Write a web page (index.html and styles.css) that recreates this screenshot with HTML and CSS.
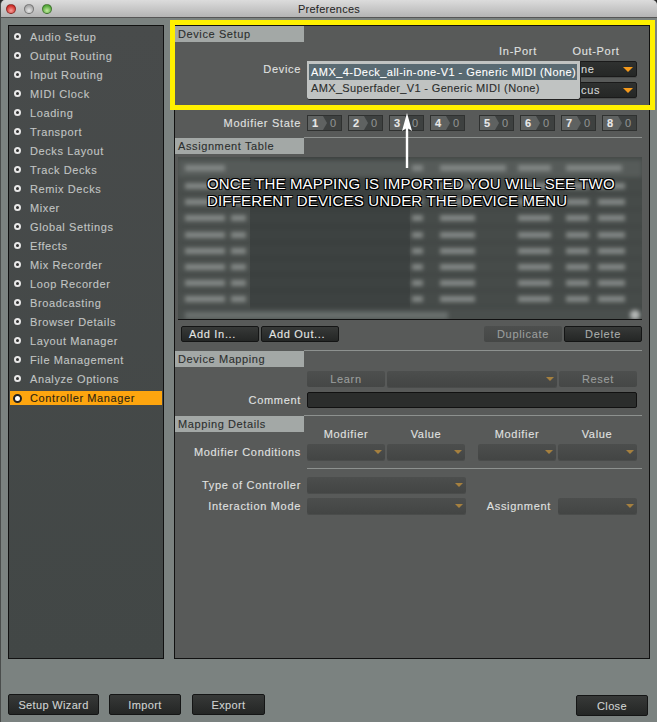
FILE: index.html
```html
<!DOCTYPE html>
<html lang="en">
<head>
    <meta charset="UTF-8">
    <title>Preferences</title>
    <link rel="stylesheet" href="styles.css">
</head>
<body>
<div class="window">
    <div class="titlebar">
        <div class="lights">
            <span class="light red"></span>
            <span class="light grey"></span>
            <span class="light green"></span>
        </div>
        <div class="title">Preferences</div>
    </div>

    <div class="content">
        <ul class="sidebar">
            <li><i></i>Audio Setup</li>
            <li><i></i>Output Routing</li>
            <li><i></i>Input Routing</li>
            <li><i></i>MIDI Clock</li>
            <li><i></i>Loading</li>
            <li><i></i>Transport</li>
            <li><i></i>Decks Layout</li>
            <li><i></i>Track Decks</li>
            <li><i></i>Remix Decks</li>
            <li><i></i>Mixer</li>
            <li><i></i>Global Settings</li>
            <li><i></i>Effects</li>
            <li><i></i>Mix Recorder</li>
            <li><i></i>Loop Recorder</li>
            <li><i></i>Broadcasting</li>
            <li><i></i>Browser Details</li>
            <li><i></i>Layout Manager</li>
            <li><i></i>File Management</li>
            <li><i></i>Analyze Options</li>
            <li class="active"><i></i>Controller Manager</li>
        </ul>

        <div class="main">
            <div class="section-head">Device Setup</div>
            <div class="row port-labels">
                <span class="col-label w-78">In-Port</span>
                <span class="col-label w-78">Out-Port</span>
            </div>
            <div class="row device-row">
                <span class="label">Device</span>
                <div class="select dark out-port">ne</div>
            </div>
            <div class="row focus-row">
                <div class="select dark out-port">cus</div>
            </div>
            <div class="row modifier-row">
                <span class="label">Modifier State</span>
                <div class="mod"><b>1</b><s></s><em>0</em></div>
                <div class="mod"><b>2</b><s></s><em>0</em></div>
                <div class="mod"><b>3</b><s></s><em>0</em></div>
                <div class="mod"><b>4</b><s></s><em>0</em></div>
                <div class="mod group-start"><b>5</b><s></s><em>0</em></div>
                <div class="mod"><b>6</b><s></s><em>0</em></div>
                <div class="mod"><b>7</b><s></s><em>0</em></div>
                <div class="mod"><b>8</b><s></s><em>0</em></div>
            </div>

            <div class="rule full table-rule"></div>
            <div class="section-head">Assignment Table</div>
            <div class="table">
                <div class="blur">
                    <div class="t-row t-header"><span class="c1"></span><span class="c3"></span><span class="c4 wide"></span><span class="c5"></span><span class="c6 wide"></span></div>
                    <div class="t-row"><span class="c1"></span><span class="c2"></span><span class="c3"></span><span class="c4"></span><span class="c5"></span><span class="c6"></span><span class="c7"></span></div>
                    <div class="t-row"><span class="c1"></span><span class="c2"></span><span class="c3"></span><span class="c4"></span><span class="c5"></span><span class="c6"></span><span class="c7"></span></div>
                    <div class="t-row"><span class="c1"></span><span class="c2"></span><span class="c3"></span><span class="c4"></span><span class="c5"></span><span class="c6"></span><span class="c7"></span></div>
                    <div class="t-row"><span class="c1"></span><span class="c2"></span><span class="c3"></span><span class="c4"></span><span class="c5"></span><span class="c6"></span><span class="c7"></span></div>
                    <div class="t-row"><span class="c1"></span><span class="c2"></span><span class="c3"></span><span class="c4"></span><span class="c5"></span><span class="c6"></span><span class="c7"></span></div>
                    <div class="t-row"><span class="c1"></span><span class="c2"></span><span class="c3"></span><span class="c4"></span><span class="c5"></span><span class="c6"></span><span class="c7"></span></div>
                    <div class="t-row"><span class="c1"></span><span class="c2"></span><span class="c3"></span><span class="c4"></span><span class="c5"></span><span class="c6"></span><span class="c7"></span></div>
                    <div class="t-row"><span class="c1"></span><span class="c2"></span><span class="c3"></span><span class="c4"></span><span class="c5"></span><span class="c6"></span><span class="c7"></span></div>
                    <div class="scrollbar"><span class="thumb"></span><span class="corner"></span></div>
                </div>
            </div>
            <div class="row table-buttons">
                <button class="btn w-78 left">Add In...</button>
                <button class="btn w-78 left">Add Out...</button>
                <button class="btn w-78 off push">Duplicate</button>
                <button class="btn w-78 delete">Delete</button>
            </div>

            <div class="rule full mapping-rule"></div>
            <div class="section-head">Device Mapping</div>
            <div class="row learn-row">
                <span class="spacer"></span>
                <button class="btn w-78 off">Learn</button>
                <div class="select w-170"></div>
                <button class="btn w-78 off">Reset</button>
            </div>
            <div class="row comment-row">
                <span class="label">Comment</span>
                <div class="comment"></div>
            </div>

            <div class="rule full details-rule"></div>
            <div class="section-head">Mapping Details</div>
            <div class="row cond-labels">
                <span class="spacer"></span>
                <span class="col-label w-78">Modifier</span>
                <span class="col-label w-78">Value</span>
                <span class="col-label w-78 far">Modifier</span>
                <span class="col-label w-78">Value</span>
            </div>
            <div class="row cond-row">
                <span class="label">Modifier Conditions</span>
                <div class="select w-78"></div>
                <div class="select w-78"></div>
                <div class="select w-78 far"></div>
                <div class="select w-79"></div>
            </div>
            <div class="rule short"></div>
            <div class="row type-row">
                <span class="label">Type of Controller</span>
                <div class="select w-159"></div>
            </div>
            <div class="row mode-row">
                <span class="label">Interaction Mode</span>
                <div class="select w-159"></div>
                <span class="assign-label">Assignment</span>
                <div class="select w-79"></div>
            </div>
        </div>
    </div>

    <div class="footer">
        <button class="btn foot w-91">Setup Wizard</button>
        <button class="btn foot w-72">Import</button>
        <button class="btn foot w-73 export">Export</button>
        <button class="btn foot close">Close</button>
    </div>

    <!-- annotations drawn over the screenshot -->
    <div class="highlight"></div>
    <div class="popup">
        <div class="popup-item selected">AMX_4-Deck_all-in-one-V1 - Generic MIDI (None)</div>
        <div class="popup-item">AMX_Superfader_V1 - Generic MIDI (None)</div>
    </div>
    <svg class="arrow" width="14" height="56" viewBox="0 0 14 56">
        <path d="M7 0 L12 18 L8.2 15.5 L8.2 55 L5.8 55 L5.8 15.5 L2 18 Z" fill="#fff"/>
    </svg>
    <div class="caption">ONCE THE MAPPING IS IMPORTED YOU WILL SEE TWO<br>DIFFERENT DEVICES UNDER THE DEVICE MENU</div>
</div>
</body>
</html>
```

FILE: styles.css
```css
* {
    box-sizing: border-box;
}
html, body {
    margin: 0;
    padding: 0;
    background: #2a2a2a;
}
body {
    font-family: "Liberation Sans", Arial, sans-serif;
    font-size: 11px;
    letter-spacing: 0.6px;
    -webkit-text-stroke: 0.1px;
    width: 657px;
    height: 722px;
    overflow: hidden;
}
.window {
    position: relative;
    width: 657px;
    height: 722px;
    background: #7b8280;
    border-left: 1px solid #4a4d4c;
    border-radius: 5px 5px 0 0;
    overflow: hidden;
}

/* title bar */
.titlebar {
    position: relative;
    height: 18px;
    background: linear-gradient(#dcdcdc, #b4b4b4);
    border-bottom: 1px solid #555;
}
.lights {
    position: absolute;
    left: 5px;
    top: 4px;
    display: flex;
    gap: 8px;
}
.light {
    width: 10px;
    height: 10px;
    border-radius: 50%;
    border: 1px solid rgba(0, 0, 0, 0.35);
}
.red { background: radial-gradient(circle at 50% 70%, #f9a09a, #cf2f2a 70%); }
.grey { background: radial-gradient(circle at 50% 70%, #e8e8e8, #a8a8a8 70%); }
.green { background: radial-gradient(circle at 50% 70%, #c4eda0, #55a83c 70%); }
.title {
    text-align: center;
    font-size: 11px;
    line-height: 18px;
    letter-spacing: 0.25px;
    -webkit-text-stroke: 0;
    color: #222;
}

/* main area */
.content {
    display: flex;
    gap: 10px;
    padding: 7px 0 0 7px;
}
.sidebar {
    list-style: none;
    margin: 0;
    padding: 1px 1px 0;
    width: 156px;
    height: 634px;
    background: linear-gradient(#484b4b, #424746);
    border: 1px solid #111;
}
.sidebar li {
    display: flex;
    align-items: center;
    height: 19px;
    color: #c2c5c4;
    padding-left: 4px;
    white-space: nowrap;
}
.sidebar li i {
    width: 7px;
    height: 7px;
    margin-right: 9px;
    border-radius: 50%;
    border: 2px solid #e8e8e8;
    background: #333;
}
.sidebar li.active {
    height: 14px;
    margin-top: 3px;
    background: #fda50f;
    color: #2d2410;
}
.sidebar li.active i {
    width: 9px;
    height: 9px;
    margin-right: 8px;
    margin-left: -1px;
    border: 2px solid #222;
    background: #fff;
}
.main {
    width: 476px;
    height: 634px;
    padding-right: 7px;
    background: #585a59;
    border: 1px solid #111;
    color: #e0e2e1;
    letter-spacing: 0.68px;
}
.section-head {
    width: 129px;
    height: 16px;
    line-height: 16px;
    padding-left: 3px;
    background: #a3a8a6;
    color: #2c2f2e;
    letter-spacing: 0.6px;
}
.row {
    display: flex;
    align-items: center;
    height: 16px;
    gap: 2px;
}
.label {
    width: 126px;
    margin-right: 4px;
    text-align: right;
    white-space: nowrap;
}
.spacer {
    width: 130px;
}
.col-label {
    text-align: center;
    display: block;
}
.port-labels {
    margin-top: 1px;
    justify-content: flex-end;
    gap: 0;
    padding-right: 7px;
}
.device-row {
    margin-top: 2px;
    padding-right: 5px;
}
.focus-row {
    margin-top: 5px;
    padding-right: 5px;
    justify-content: flex-end;
}
.out-port {
    width: 79px;
    margin-left: auto;
    padding-left: 22px;
}
.modifier-row {
    margin-top: 17px;
    gap: 6px;
}
.modifier-row .label {
    margin-right: 0;
}

/* select boxes */
.select {
    position: relative;
    height: 16px;
    line-height: 15px;
    background: linear-gradient(#4c4e4d, #434544);
    border-radius: 2px;
    box-shadow: 0 1px 0 #4a4c4b;
}
.select::after {
    content: "";
    position: absolute;
    right: 3px;
    top: 6px;
    border-left: 4px solid transparent;
    border-right: 4px solid transparent;
    border-top: 4px solid #a5803f;
}
.select.dark {
    background: linear-gradient(#2f3130, #252726);
    color: #d5d7d6;
    border: 1px solid #1a1a1a;
    line-height: 14px;
}
.select.dark::after {
    right: 3px;
    top: 5px;
    border-left-width: 5px;
    border-right-width: 5px;
    border-top: 5px solid #f59a1b;
}
.w-78 { width: 78px; }
.w-79 { width: 79px; }
.w-170 { width: 170px; }
.w-159 { width: 159px; }
.w-91 { width: 91px; }
.w-72 { width: 72px; }
.w-73 { width: 73px; }
.far { margin-left: 11px; }

/* modifier state */
.mod {
    display: flex;
    align-items: center;
    width: 35px;
    height: 16px;
    background: #3e4140;
    border: 1px solid #2f3130;
}
.mod b {
    width: 15px;
    height: 14px;
    line-height: 14px;
    text-align: center;
    color: #e8e8e8;
    background: #5f6261;
}
.mod s {
    width: 0;
    height: 0;
    border-top: 7px solid transparent;
    border-bottom: 7px solid transparent;
    border-left: 4px solid #5f6261;
}
.mod em {
    font-style: normal;
    margin-left: 3px;
    color: #8f9392;
}
.group-start {
    margin-left: 8px;
}

/* rules */
.rule {
    height: 1px;
    background: #8d918f;
}
.rule.full {
    margin-left: 129px;
}
.rule.short {
    margin: 8px 0 8px 132px;
}
.table-rule {
    margin-top: 6px;
}
.mapping-rule {
    margin-top: 8px;
}
.details-rule {
    margin-top: 7px;
}

/* blurred table */
.table {
    margin: 3px 0 0 3px;
    height: 163px;
    background: linear-gradient(90deg, #4a4f4d 72px, #3d4241 72px, #3d4241 232px, #464b49 232px);
    border-bottom: 1px solid #111;
    overflow: hidden;
}
.blur {
    height: 162px;
    padding-top: 3px;
    filter: blur(2px);
}
.t-row {
    position: relative;
    height: 16.2px;
    border-bottom: 1px solid rgba(0, 0, 0, 0.15);
}
.t-row span {
    position: absolute;
    top: 5px;
    height: 6px;
    background: #838886;
}
.t-header {
    height: 18px;
    background: #565b59;
}
.c1 { left: 7px; width: 40px; }
.c2 { left: 53px; width: 15px; }
.c3 { left: 234px; width: 11px; }
.c4 { left: 262px; width: 35px; }
.c4.wide { width: 66px; }
.c5 { left: 340px; width: 33px; }
.c6 { left: 388px; width: 23px; }
.c6.wide { width: 56px; }
.c7 { left: 420px; width: 27px; }
.scrollbar {
    position: relative;
    height: 13px;
    background: #4a4f4d;
}
.thumb {
    position: absolute;
    left: 7px;
    top: 4px;
    width: 263px;
    height: 7px;
    background: #6a706e;
}
.corner {
    position: absolute;
    right: 2px;
    top: 2px;
    width: 10px;
    height: 10px;
    border-radius: 50%;
    background: #b5b8b7;
}

/* buttons */
.btn {
    height: 16px;
    padding: 0;
    border: 1px solid #141515;
    border-radius: 2px;
    font: inherit;
    letter-spacing: inherit;
    color: #e4e6e5;
    background: linear-gradient(#373938, #242625);
}
.btn.left {
    text-align: left;
    padding-left: 7px;
}
.btn.off {
    border: none;
    color: #9b9e9d;
    background: linear-gradient(#4d4f4e, #454746);
}
.btn.delete {
    color: #a9acab;
}
.table-buttons {
    margin-top: 6px;
    padding-left: 6px;
}
.push {
    margin-left: auto;
}
.learn-row {
    margin-top: 4px;
}
.comment-row {
    margin-top: 5px;
}
.comment {
    width: 330px;
    height: 16px;
    background: #2b2d2c;
    border: 1px solid #111;
    border-radius: 2px;
}
.cond-labels {
    height: 12px;
    margin-top: -4px;
}
.cond-row {
    margin-top: 4px;
}
.mode-row {
    margin-top: 5px;
}
.assign-label {
    width: 83px;
    margin-right: 5px;
    text-align: right;
}

/* footer */
.footer {
    display: flex;
    align-items: flex-start;
    gap: 10px;
    padding: 35px 9px 0 7px;
}
.btn.foot {
    height: 21px;
    color: #d0d3d2;
    letter-spacing: 0.35px;
}
.export {
    margin-left: 1px;
}
.btn.close {
    width: 72px;
    margin-left: auto;
    margin-top: 1px;
}

/* annotations */
.highlight {
    position: absolute;
    left: 169px;
    top: 20px;
    width: 485px;
    height: 90px;
    border: 5px solid #fff000;
}
.popup {
    position: absolute;
    left: 306px;
    top: 61px;
    width: 274px;
    height: 39px;
    padding: 3px 3px 0 2px;
    background: #c0c3c2;
    border-right: 1px solid #222;
    border-bottom: 1px solid #222;
    border-radius: 0 0 3px 3px;
    color: #2b2d2c;
}
.popup-item {
    height: 16px;
    line-height: 16px;
    padding-left: 2px;
    white-space: nowrap;
    letter-spacing: 0.35px;
}
.popup-item.selected {
    letter-spacing: 0.45px;
    background: #596a72;
    color: #fff;
}
.arrow {
    position: absolute;
    left: 399px;
    top: 113px;
}
.caption {
    position: absolute;
    left: 206px;
    top: 175px;
    font-size: 15px;
    line-height: 17px;
    letter-spacing: 0.17px;
    -webkit-text-stroke: 0;
    color: #fff;
    white-space: nowrap;
    text-shadow: -1px -1px 0 #000, 1px -1px 0 #000, -1px 1px 0 #000, 1px 1px 0 #000, 0 1px 1px #000;
}
```
